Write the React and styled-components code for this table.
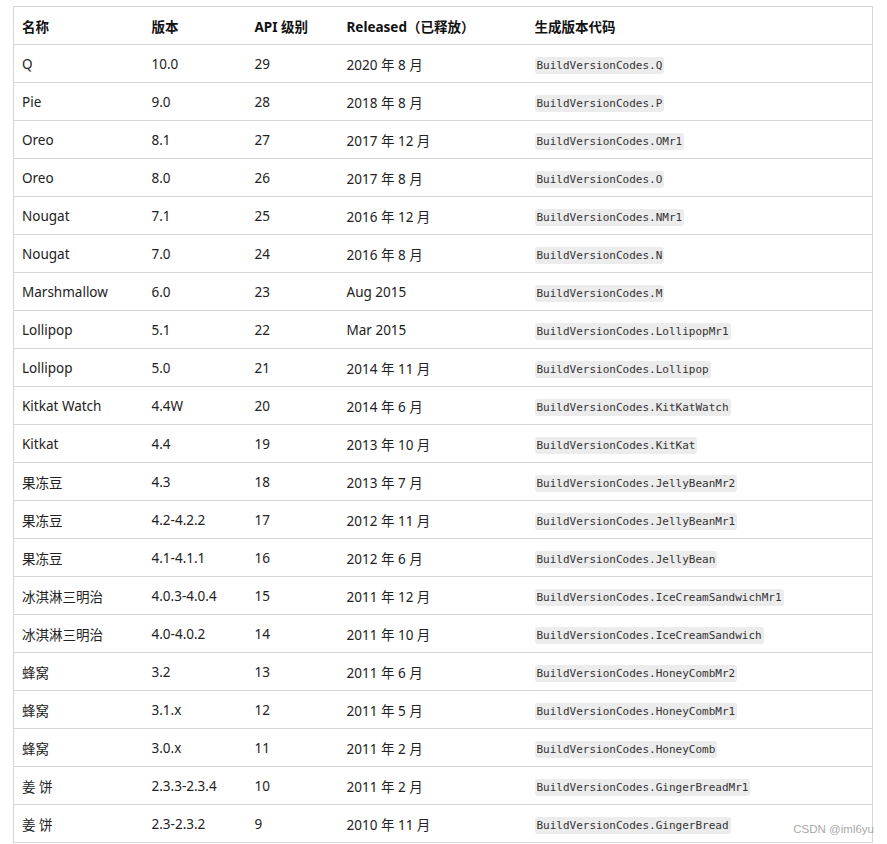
import React from 'react'
import styled, { createGlobalStyle } from 'styled-components'

const rows = [
    ['Q', '10.0', '29', '2020 年 8 月', 'BuildVersionCodes.Q'],
    ['Pie', '9.0', '28', '2018 年 8 月', 'BuildVersionCodes.P'],
    ['Oreo', '8.1', '27', '2017 年 12 月', 'BuildVersionCodes.OMr1'],
    ['Oreo', '8.0', '26', '2017 年 8 月', 'BuildVersionCodes.O'],
    ['Nougat', '7.1', '25', '2016 年 12 月', 'BuildVersionCodes.NMr1'],
    ['Nougat', '7.0', '24', '2016 年 8 月', 'BuildVersionCodes.N'],
    ['Marshmallow', '6.0', '23', 'Aug 2015', 'BuildVersionCodes.M'],
    ['Lollipop', '5.1', '22', 'Mar 2015', 'BuildVersionCodes.LollipopMr1'],
    ['Lollipop', '5.0', '21', '2014 年 11 月', 'BuildVersionCodes.Lollipop'],
    ['Kitkat Watch', '4.4W', '20', '2014 年 6 月', 'BuildVersionCodes.KitKatWatch'],
    ['Kitkat', '4.4', '19', '2013 年 10 月', 'BuildVersionCodes.KitKat'],
    ['果冻豆', '4.3', '18', '2013 年 7 月', 'BuildVersionCodes.JellyBeanMr2'],
    ['果冻豆', '4.2-4.2.2', '17', '2012 年 11 月', 'BuildVersionCodes.JellyBeanMr1'],
    ['果冻豆', '4.1-4.1.1', '16', '2012 年 6 月', 'BuildVersionCodes.JellyBean'],
    ['冰淇淋三明治', '4.0.3-4.0.4', '15', '2011 年 12 月', 'BuildVersionCodes.IceCreamSandwichMr1'],
    ['冰淇淋三明治', '4.0-4.0.2', '14', '2011 年 10 月', 'BuildVersionCodes.IceCreamSandwich'],
    ['蜂窝', '3.2', '13', '2011 年 6 月', 'BuildVersionCodes.HoneyCombMr2'],
    ['蜂窝', '3.1.x', '12', '2011 年 5 月', 'BuildVersionCodes.HoneyCombMr1'],
    ['蜂窝', '3.0.x', '11', '2011 年 2 月', 'BuildVersionCodes.HoneyComb'],
    ['姜 饼', '2.3.3-2.3.4', '10', '2011 年 2 月', 'BuildVersionCodes.GingerBreadMr1'],
    ['姜 饼', '2.3-2.3.2', '9', '2010 年 11 月', 'BuildVersionCodes.GingerBread'],
]

const App = () => {
    return (
        <>
            <GlobalStyle />
            <Page>
                <Table>
                    <colgroup>
                        <col style={{ width: 130 }} />
                        <col style={{ width: 103 }} />
                        <col style={{ width: 92 }} />
                        <col style={{ width: 188 }} />
                        <col />
                    </colgroup>
                    <thead>
                        <tr>
                            <Th>名称</Th>
                            <Th>版本</Th>
                            <Th>API 级别</Th>
                            <Th>Released（已释放）</Th>
                            <Th>生成版本代码</Th>
                        </tr>
                    </thead>
                    <tbody>
                        {rows.map((r, i) => (
                            <tr key={i}>
                                <Td>{r[0]}</Td>
                                <Td>{r[1]}</Td>
                                <Td>{r[2]}</Td>
                                <Td>{r[3]}</Td>
                                <Td><Code>{r[4]}</Code></Td>
                            </tr>
                        ))}
                    </tbody>
                </Table>
                <Watermark>CSDN @iml6yu</Watermark>
            </Page>
        </>
    )
}

export default App


const GlobalStyle = createGlobalStyle`
    body{
        margin: 0;
        background: #fff;
        font-family: "Noto Sans", "Noto Sans CJK SC", sans-serif;
        color: #222;
    }
`

const Page = styled.div`
    position: relative;
    padding: 6px 0 0 13px;
    width: 860px;
`

const Table = styled.table`
    width: 860px;
    table-layout: fixed;
    border-collapse: collapse;
    border: 1px solid #d6d6d6;
    font-size: 13.5px;
`

const Th = styled.th`
    height: 37px;
    padding: 0 8px;
    text-align: left;
    font-weight: 700;
    color: #111;
    border-bottom: 1px solid #d6d6d6;
    white-space: nowrap;
`

const Td = styled.td`
    height: 37px;
    padding: 0 8px;
    color: #222;
    border-bottom: 1px solid #d6d6d6;
    white-space: nowrap;
`

const Code = styled.code`
    font-family: "DejaVu Sans Mono", monospace;
    font-size: 11px;
    color: #333;
    background: #ececec;
    border-radius: 3px;
    padding: 2px 2px;
`

const Watermark = styled.div`
    position: absolute;
    right: -1px;
    bottom: 8px;
    font-family: "Liberation Sans", sans-serif;
    font-size: 11.5px;
    color: #a8a8a8;
`
